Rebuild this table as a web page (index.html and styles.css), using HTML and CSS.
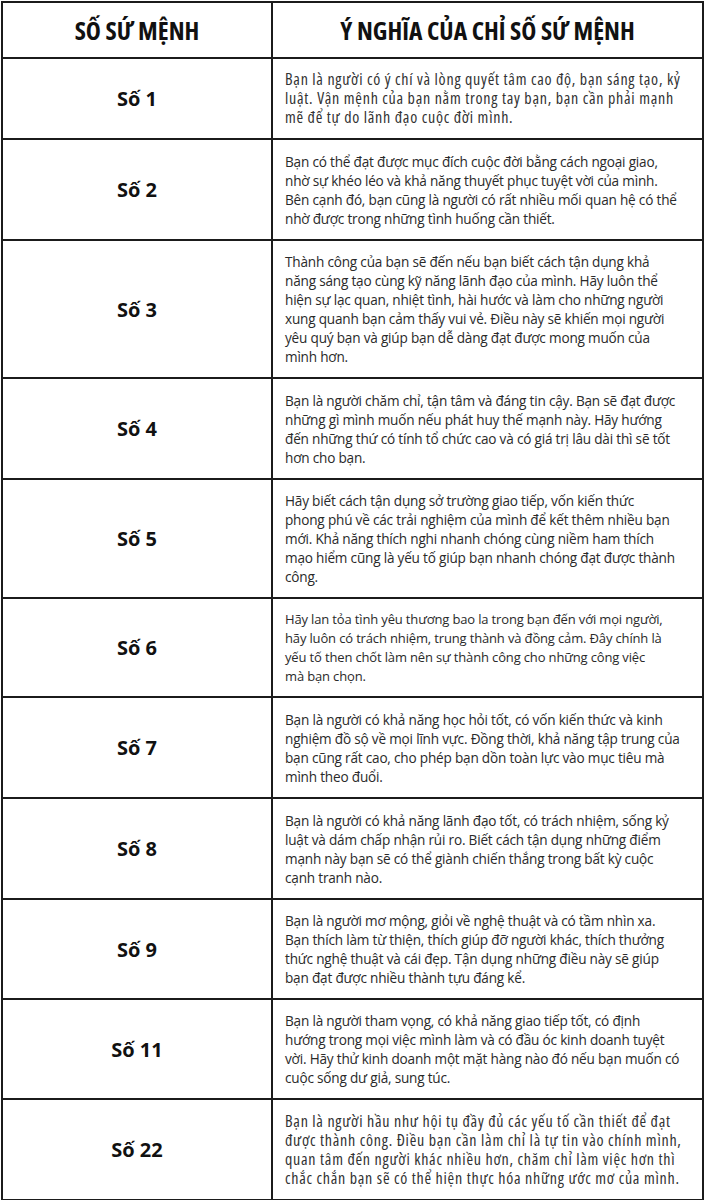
FILE: index.html
```html
<!DOCTYPE html>
<html lang="vi">
<head>
<meta charset="utf-8">
<title>Số sứ mệnh</title>
<link rel="stylesheet" href="styles.css">
</head>
<body>
<table class="tbl">
  <colgroup><col class="c-num"><col class="c-desc"></colgroup>
  <thead>
    <tr class="h-head"><th>SỐ SỨ MỆNH</th><th>Ý NGHĨA CỦA CHỈ SỐ SỨ MỆNH</th></tr>
  </thead>
  <tbody>
    <tr class="h81"><td class="num">Số 1</td><td class="desc cond">Bạn là người có ý chí và lòng quyết tâm cao độ, bạn sáng tạo, kỷ<br>luật. Vận mệnh của bạn nằm trong tay bạn, bạn cần phải mạnh<br>mẽ để tự do lãnh đạo cuộc đời mình.</td></tr>
    <tr class="h101"><td class="num">Số 2</td><td class="desc">Bạn có thể đạt được mục đích cuộc đời bằng cách ngoại giao,<br>nhờ sự khéo léo và khả năng thuyết phục tuyệt vời của mình.<br>Bên cạnh đó, bạn cũng là người có rất nhiều mối quan hệ có thể<br>nhờ được trong những tình huống cần thiết.</td></tr>
    <tr class="h138"><td class="num">Số 3</td><td class="desc">Thành công của bạn sẽ đến nếu bạn biết cách tận dụng khả<br>năng sáng tạo cùng kỹ năng lãnh đạo của mình. Hãy luôn thể<br>hiện sự lạc quan, nhiệt tình, hài hước và làm cho những người<br>xung quanh bạn cảm thấy vui vẻ. Điều này sẽ khiến mọi người<br>yêu quý bạn và giúp bạn dễ dàng đạt được mong muốn của<br>mình hơn.</td></tr>
    <tr class="h101"><td class="num">Số 4</td><td class="desc">Bạn là người chăm chỉ, tận tâm và đáng tin cậy. Bạn sẽ đạt được<br>những gì mình muốn nếu phát huy thế mạnh này. Hãy hướng<br>đến những thứ có tính tổ chức cao và có giá trị lâu dài thì sẽ tốt<br>hơn cho bạn.</td></tr>
    <tr class="h119"><td class="num">Số 5</td><td class="desc">Hãy biết cách tận dụng sở trường giao tiếp, vốn kiến thức<br>phong phú về các trải nghiệm của mình để kết thêm nhiều bạn<br>mới. Khả năng thích nghi nhanh chóng cùng niềm ham thích<br>mạo hiểm cũng là yếu tố giúp bạn nhanh chóng đạt được thành<br>công.</td></tr>
    <tr class="h99"><td class="num">Số 6</td><td class="desc fit">Hãy lan tỏa tình yêu thương bao la trong bạn đến với mọi người,<br>hãy luôn có trách nhiệm, trung thành và đồng cảm. Đây chính là<br>yếu tố then chốt làm nên sự thành công cho những công việc<br>mà bạn chọn.</td></tr>
    <tr class="h101"><td class="num">Số 7</td><td class="desc">Bạn là người có khả năng học hỏi tốt, có vốn kiến thức và kinh<br>nghiệm đồ sộ về mọi lĩnh vực. Đồng thời, khả năng tập trung của<br>bạn cũng rất cao, cho phép bạn dồn toàn lực vào mục tiêu mà<br>mình theo đuổi.</td></tr>
    <tr class="h101"><td class="num">Số 8</td><td class="desc">Bạn là người có khả năng lãnh đạo tốt, có trách nhiệm, sống kỷ<br>luật và dám chấp nhận rủi ro. Biết cách tận dụng những điểm<br>mạnh này bạn sẽ có thể giành chiến thắng trong bất kỳ cuộc<br>cạnh tranh nào.</td></tr>
    <tr class="h100"><td class="num">Số 9</td><td class="desc">Bạn là người mơ mộng, giỏi về nghệ thuật và có tầm nhìn xa.<br>Bạn thích làm từ thiện, thích giúp đỡ người khác, thích thưởng<br>thức nghệ thuật và cái đẹp. Tận dụng những điều này sẽ giúp<br>bạn đạt được nhiều thành tựu đáng kể.</td></tr>
    <tr class="h100"><td class="num">Số 11</td><td class="desc">Bạn là người tham vọng, có khả năng giao tiếp tốt, có định<br>hướng trong mọi việc mình làm và có đầu óc kinh doanh tuyệt<br>vời. Hãy thử kinh doanh một mặt hàng nào đó nếu bạn muốn có<br>cuộc sống dư giả, sung túc.</td></tr>
    <tr class="h101"><td class="num">Số 22</td><td class="desc cond">Bạn là người hầu như hội tụ đầy đủ các yếu tố cần thiết để đạt<br>được thành công. Điều bạn cần làm chỉ là tự tin vào chính mình,<br>quan tâm đến người khác nhiều hơn, chăm chỉ làm việc hơn thì<br>chắc chắn bạn sẽ có thể hiện thực hóa những ước mơ của mình.</td></tr>
  </tbody>
</table>
</body>
</html>
```
FILE: styles.css
```css
html, body {
  margin: 0;
  padding: 0;
  background: #ffffff;
}
.tbl {
  border-collapse: collapse;
  width: 703px;
  margin: 1px 0 0 1px;
  table-layout: fixed;
  color: #1f1f1f;
}
.c-num { width: 270px; }
.tbl th,
.tbl td {
  border: 2px solid #1b1b1b;
  padding: 0;
}
.tbl th {
  font-family: "Open Sans", "Liberation Sans", sans-serif;
  font-weight: 700;
  font-stretch: 77%;
  font-size: 25.5px;
  color: #111;
  text-align: center;
  vertical-align: middle;
}
.h-head { height: 56px; }
.h81 { height: 81px; }
.h99 { height: 99px; }
.h100 { height: 100px; }
.h101 { height: 101px; }
.h119 { height: 119px; }
.h138 { height: 138px; }
.num {
  font-family: "Open Sans", "Liberation Sans", sans-serif;
  font-weight: 700;
  font-size: 20px;
  color: #111;
  text-align: center;
  vertical-align: middle;
}
.desc {
  font-family: "Open Sans", "Liberation Sans", sans-serif;
  font-size: 13.6px;
  letter-spacing: -0.2px;
  line-height: 19px;
  color: #2a2a2a;
  padding: 0 8px 0 12px !important;
  white-space: nowrap;
  vertical-align: middle;
}
.desc.fit {
  font-size: 13px;
  letter-spacing: -0.15px;
}
.desc.cond {
  font-size: 16px;
  font-stretch: 85%;
  letter-spacing: 0.75px;
  line-height: 19px;
  color: #333;
}
```
